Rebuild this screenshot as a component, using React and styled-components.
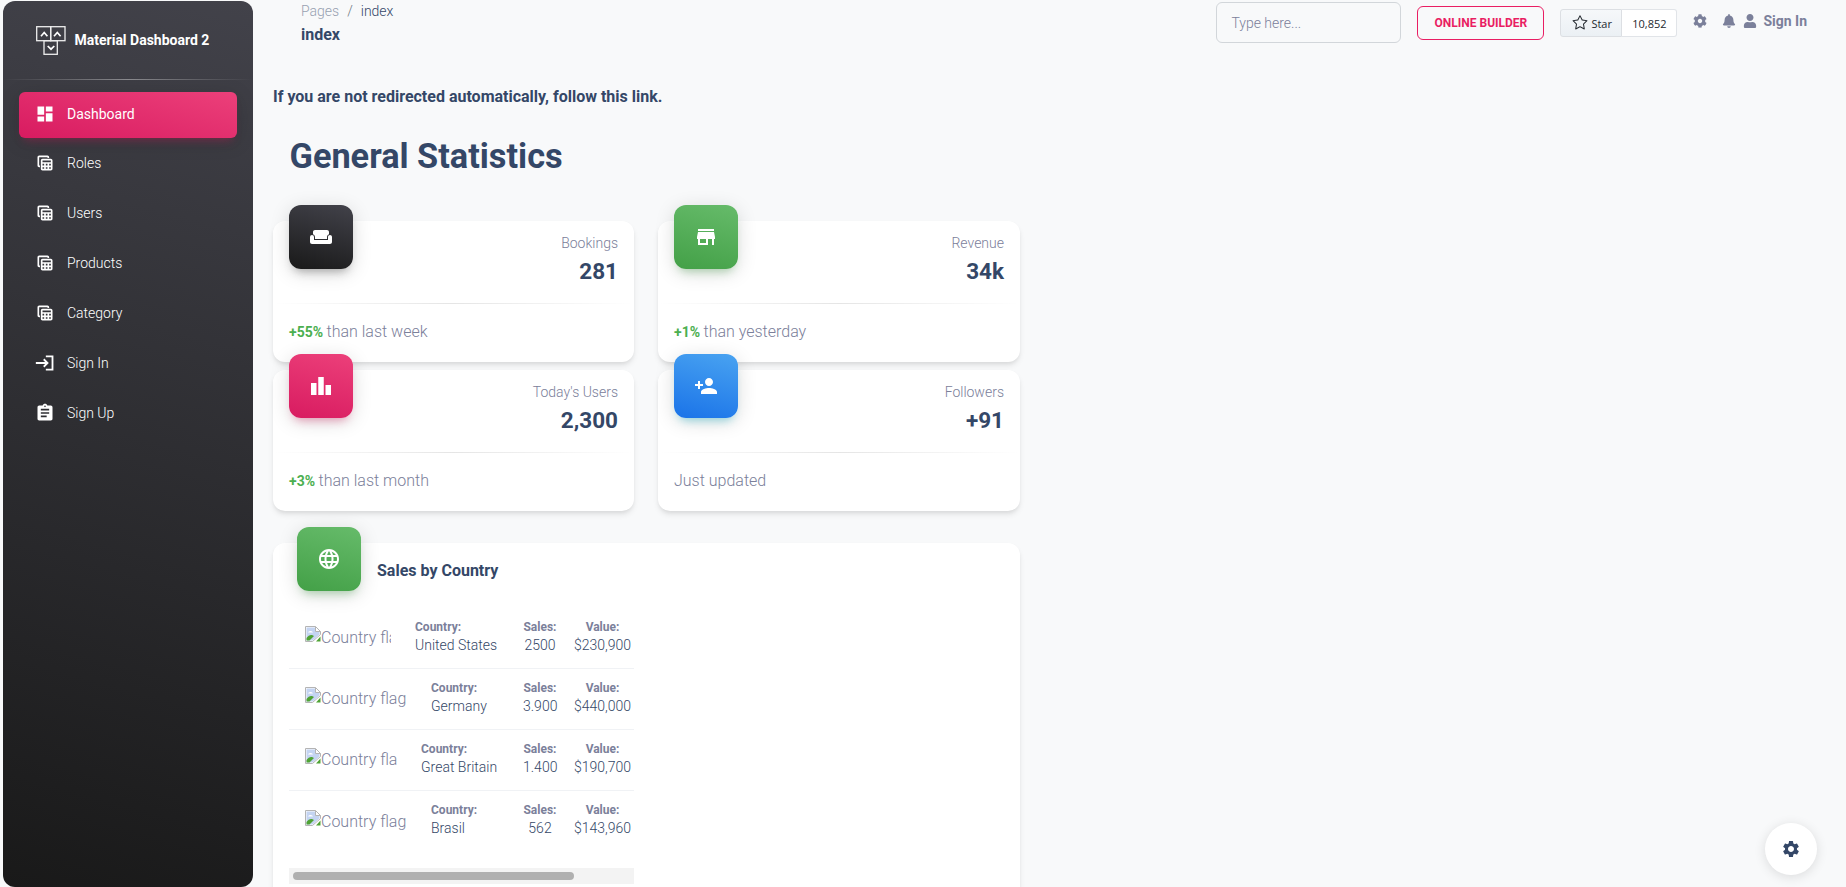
import React from "react";
import styled, { createGlobalStyle } from "styled-components";
import {
  MdDashboard,
  MdTableView,
  MdAssignment,
  MdWeekend,
  MdStore,
  MdLeaderboard,
  MdPersonAdd,
  MdLanguage,
  MdSettings,
} from "react-icons/md";
import { FaCog, FaBell, FaUser } from "react-icons/fa";
import { GoStar } from "react-icons/go";

const GlobalStyle = createGlobalStyle`
  html, body {
    margin: 0;
    height: 100%;
    overflow: hidden;
    background: #f8f9fa;
    font-family: Roboto, "Liberation Sans", sans-serif;
    color: #344767;
  }
  * { box-sizing: border-box; }
`;

const tones = {
  dark: { bg: "linear-gradient(195deg, #42424a, #191919)", glow: "rgba(64,64,64,.4)" },
  green: { bg: "linear-gradient(195deg, #66bb6a, #43a047)", glow: "rgba(76,175,80,.4)" },
  pink: { bg: "linear-gradient(195deg, #ec407a, #d81b60)", glow: "rgba(233,30,99,.4)" },
  blue: { bg: "linear-gradient(195deg, #49a3f1, #1a73e8)", glow: "rgba(0,188,212,.4)" },
};

const LoginIcon = () => (
  <svg width="20" height="20" viewBox="0 0 24 24" fill="none" stroke="currentColor" strokeWidth="2.2">
    <path d="M1 12h13.500M10.500 7.500 15 12l-4.500 4.500M13 4h8v16h-8" />
  </svg>
);

const navItems = [
  { label: "Dashboard", icon: <MdDashboard />, active: true },
  { label: "Roles", icon: <MdTableView /> },
  { label: "Users", icon: <MdTableView /> },
  { label: "Products", icon: <MdTableView /> },
  { label: "Category", icon: <MdTableView /> },
  { label: "Sign In", icon: <LoginIcon /> },
  { label: "Sign Up", icon: <MdAssignment /> },
];

const stats = [
  { tone: "dark", icon: <MdWeekend />, title: "Bookings", value: "281", delta: "+55%", note: "than last week" },
  { tone: "green", icon: <MdStore />, title: "Revenue", value: "34k", delta: "+1%", note: "than yesterday" },
  { tone: "pink", icon: <MdLeaderboard />, title: "Today's Users", value: "2,300", delta: "+3%", note: "than last month" },
  { tone: "blue", icon: <MdPersonAdd />, title: "Followers", value: "+91", note: "Just updated" },
];

const countries = [
  { name: "United States", sales: "2500", value: "$230,900", flagWidth: 86 },
  { name: "Germany", sales: "3.900", value: "$440,000", flagWidth: 102 },
  { name: "Great Britain", sales: "1.400", value: "$190,700", flagWidth: 92 },
  { name: "Brasil", sales: "562", value: "$143,960", flagWidth: 102 },
];

const LogoMark = () => (
  <svg width="30" height="30" viewBox="0 -1 30 30" fill="none" stroke="#eee" strokeWidth="1.3">
    <rect x="0.7" y="0.7" width="14" height="14" />
    <rect x="14.7" y="0.7" width="14.300" height="14" />
    <rect x="8" y="14.700" width="13.300" height="13.600" />
    <path d="M5 10.200 8.200 6.500l3.200 3.700M18 10.200l3.300-3.700 3.300 3.700M11.700 20l3.300 3.200 3.300-3.200" stroke="#fff" strokeWidth="1.700" />
  </svg>
);

const BrokenImage = () => (
  <svg width="16" height="16" viewBox="0 0 16 16">
    <path d="M.5.5h10l5 5v3l-8 7H.5z" fill="#fff" stroke="#b4b4b4" />
    <path d="M1.500 1.500h9v4h4v3l-7 6h-6z" fill="#c4d4f2" />
    <path d="M3 6.500c1-2 4-2 5 0z" fill="#fff" />
    <path d="M1.500 14.500v-2.500c2-2.500 4-3.500 6.500-2.500l1 .5-4.500 4.500z" fill="#4fa334" />
    <path d="M11 15.500h4.500v-5z" fill="#4fa334" />
    <path d="M10.500.5v5h5" fill="none" stroke="#b4b4b4" />
  </svg>
);

const App = () => {
  return (
    <Page>
      <GlobalStyle />
      <Sidebar>
        <Brand>
          <LogoMark />
          <BrandName>Material Dashboard 2</BrandName>
        </Brand>
        <SideRule />
        <NavList>
          {navItems.map((item) => (
            <NavItem key={item.label} $active={item.active}>
              <NavIcon>{item.icon}</NavIcon>
              {item.label}
            </NavItem>
          ))}
        </NavList>
      </Sidebar>

      <Main>
        <TopBar>
          <Crumbs>
            <CrumbTrail>
              <CrumbMuted>Pages</CrumbMuted>
              <CrumbSlash>/</CrumbSlash>
              <span>index</span>
            </CrumbTrail>
            <PageName>index</PageName>
          </Crumbs>
          <SearchInput placeholder="Type here..." />
          <BuilderButton>ONLINE BUILDER</BuilderButton>
          <StarWidget>
            <StarButton>
              <GoStar size={16} color="#24292f" />
              Star
            </StarButton>
            <StarCount>10,852</StarCount>
          </StarWidget>
          <TopActions>
            <GearLink><FaCog /></GearLink>
            <BellLink><FaBell /></BellLink>
            <SignIn>
              <FaUser />
              Sign In
            </SignIn>
          </TopActions>
        </TopBar>

        <Redirect>If you are not redirected automatically, follow this link.</Redirect>
        <Heading>General Statistics</Heading>

        <StatGrid>
          {stats.map((stat) => (
            <StatCard key={stat.title}>
              <StatHead>
                <IconBox $tone={stat.tone}>{stat.icon}</IconBox>
                <StatText>
                  <StatTitle>{stat.title}</StatTitle>
                  <StatValue>{stat.value}</StatValue>
                </StatText>
              </StatHead>
              <Rule />
              <StatFoot>
                {stat.delta && <Delta>{stat.delta} </Delta>}
                {stat.note}
              </StatFoot>
            </StatCard>
          ))}
        </StatGrid>

        <SalesCard>
          <SalesHead>
            <IconBox $tone="green"><MdLanguage /></IconBox>
            <SalesTitle>Sales by Country</SalesTitle>
          </SalesHead>
          <TableScroll>
            <TableInner>
              {countries.map((row) => (
                <CountryRow key={row.name}>
                  <FlagCell $width={row.flagWidth}>
                    <BrokenImage />
                    <span>Country flag</span>
                  </FlagCell>
                  <CountryCell>
                    <CellLabel>Country:</CellLabel>
                    <CellValue>{row.name}</CellValue>
                  </CountryCell>
                  <SalesCell>
                    <CellLabel>Sales:</CellLabel>
                    <CellValue>{row.sales}</CellValue>
                  </SalesCell>
                  <ValueCell>
                    <CellLabel>Value:</CellLabel>
                    <CellValue>{row.value}</CellValue>
                  </ValueCell>
                </CountryRow>
              ))}
            </TableInner>
          </TableScroll>
          <ScrollTrack>
            <ScrollThumb />
          </ScrollTrack>
        </SalesCard>
      </Main>

      <SettingsFab><MdSettings /></SettingsFab>
    </Page>
  );
};

export default App;

const Page = styled.div`
  display: flex;
  align-items: flex-start;
  height: 100vh;
  overflow: hidden;
`;

const Sidebar = styled.aside`
  flex: 0 0 250px;
  height: 886px;
  margin: 1px 0 0 3px;
  border-radius: 12px;
  background: linear-gradient(195deg, #42424a, #191919);
`;

const Brand = styled.div`
  display: flex;
  align-items: center;
  gap: 8.5px;
  height: 78px;
  padding-left: 33px;
`;

const BrandName = styled.span`
  color: #fff;
  font-size: 14px;
  font-weight: 700;
`;

const SideRule = styled.div`
  height: 1px;
  background: linear-gradient(90deg, rgba(255,255,255,0), rgba(255,255,255,.4), rgba(255,255,255,0));
`;

const NavList = styled.nav`
  display: flex;
  flex-direction: column;
  gap: 4px;
  padding: 12px 16px 0;
`;

const NavItem = styled.a`
  display: flex;
  align-items: center;
  height: 46px;
  padding-left: 17px;
  padding-bottom: ${(props) => (props.$active ? "2px" : "0")};
  border-radius: 6px;
  color: #fff;
  font-size: 14px;
  font-weight: ${(props) => (props.$active ? 400 : 300)};
  margin-bottom: ${(props) => (props.$active ? "-2px" : "0")};
  background: ${(props) => (props.$active ? tones.pink.bg : "transparent")};
  box-shadow: ${(props) =>
    props.$active ? "0 4px 20px rgba(0,0,0,.14), 0 7px 10px -5px rgba(233,30,99,.4)" : "none"};
`;

const NavIcon = styled.span`
  display: flex;
  width: 32px;
  margin-left: -1px;
  font-size: 20px;
`;

const Main = styled.main`
  flex: 1;
  min-width: 0;
  padding-left: 20px;
`;

const TopBar = styled.header`
  display: flex;
  align-items: flex-start;
  height: 47px;
  padding-left: 28px;
`;

const Crumbs = styled.div`
  margin-right: auto;
  padding-top: 1px;
`;

const CrumbTrail = styled.div`
  font-size: 14px;
  font-weight: 300;
  line-height: 21px;
`;

const CrumbMuted = styled.span`
  opacity: 0.5;
`;

const CrumbSlash = styled.span`
  margin: 0 8px;
  color: #6c757d;
`;

const PageName = styled.div`
  font-size: 16px;
  font-weight: 700;
  line-height: 26px;
`;

const SearchInput = styled.input`
  width: 185px;
  height: 41px;
  margin-top: 2px;
  padding: 0 14px;
  border: 1px solid #d2d6da;
  border-radius: 6px;
  background: transparent;
  font-family: inherit;
  font-size: 14px;
  font-weight: 300;
  outline: none;
  &::placeholder {
    color: #7b809a;
    opacity: 1;
  }
`;

const BuilderButton = styled.button`
  width: 127px;
  height: 34px;
  margin: 6px 0 0 16px;
  padding: 0;
  border: 1px solid #e91e63;
  border-radius: 6px;
  background: transparent;
  color: #e91e63;
  font-family: inherit;
  font-size: 12px;
  font-weight: 700;
`;

const StarWidget = styled.div`
  display: flex;
  height: 28px;
  margin: 9px 0 0 16px;
  font-family: "Open Sans", sans-serif;
  font-size: 11px;
  font-weight: 500;
  color: #24292f;
`;

const StarButton = styled.div`
  display: flex;
  align-items: center;
  gap: 3px;
  width: 62px;
  padding-left: 11px;
  border: 1px solid #dcdfe3;
  border-radius: 3px 0 0 3px;
  background: linear-gradient(180deg, #f6f8fa, #ebf0f4);
`;

const StarCount = styled.div`
  display: flex;
  align-items: center;
  justify-content: center;
  width: 55px;
  border: 1px solid #e1e4e8;
  border-left: 0;
  border-radius: 0 3px 3px 0;
  background: #fff;
`;

const TopActions = styled.div`
  display: flex;
  align-items: center;
  height: 42px;
  margin: 0 39px 0 16px;
  color: #7b809a;
  font-size: 14px;
`;

const GearLink = styled.span`
  display: flex;
  margin-right: 15px;
`;

const BellLink = styled.span`
  display: flex;
  margin-right: 7px;
`;

const SignIn = styled.span`
  display: flex;
  align-items: center;
  gap: 6px;
  font-size: 14px;
  font-weight: 700;
`;

const Redirect = styled.p`
  margin: 37px 0 0;
  font-size: 16px;
  font-weight: 700;
  line-height: 26px;
`;

const Heading = styled.h2`
  margin: 24px 0 0;
  padding-left: 16.5px;
  font-size: 34.3px;
  font-weight: 700;
  line-height: 45px;
`;

const StatGrid = styled.section`
  display: grid;
  grid-template-columns: 361px 362px;
  column-gap: 24px;
  row-gap: 8px;
  margin-top: 42px;
`;

const StatCard = styled.article`
  height: 141px;
  border-radius: 12px;
  background: #fff;
  box-shadow: 0 4px 6px -1px rgba(0,0,0,.1), 0 2px 4px -1px rgba(0,0,0,.06);
`;

const StatHead = styled.div`
  display: flex;
  justify-content: space-between;
  height: 82px;
  padding: 0 16px;
`;

const IconBox = styled.div`
  flex: none;
  display: flex;
  align-items: center;
  justify-content: center;
  width: 64px;
  height: 64px;
  margin-top: -16px;
  border-radius: 12px;
  color: #fff;
  font-size: 24px;
  background: ${(props) => tones[props.$tone].bg};
  box-shadow: 0 4px 20px rgba(0,0,0,.14), 0 7px 10px -5px ${(props) => tones[props.$tone].glow};
  svg {
    margin-top: -1px;
  }
`;

const StatText = styled.div`
  padding-top: 12px;
  text-align: right;
`;

const StatTitle = styled.div`
  color: #7b809a;
  font-size: 14px;
  font-weight: 300;
  line-height: 21px;
`;

const StatValue = styled.div`
  font-size: 22.5px;
  font-weight: 700;
  line-height: 35px;
`;

const Rule = styled.div`
  height: 1px;
  background: linear-gradient(90deg, rgba(0,0,0,0), rgba(0,0,0,.1), rgba(0,0,0,0));
`;

const StatFoot = styled.p`
  margin: 15px 0 0;
  padding: 0 16px;
  color: #7b809a;
  font-size: 16px;
  font-weight: 300;
  line-height: 26px;
`;

const Delta = styled.span`
  color: #4caf50;
  font-size: 14px;
  font-weight: 700;
`;

const SalesCard = styled.section`
  width: 747px;
  height: 400px;
  margin-top: 32px;
  padding: 0 16px;
  border-radius: 12px;
  background: #fff;
  box-shadow: 0 4px 6px -1px rgba(0,0,0,.1), 0 2px 4px -1px rgba(0,0,0,.06);
`;

const SalesHead = styled.div`
  display: flex;
  height: 48px;
  padding-left: 8px;
`;

const SalesTitle = styled.h6`
  margin: 12px 0 0 16px;
  font-size: 16px;
  font-weight: 700;
  line-height: 32px;
`;

const TableScroll = styled.div`
  width: 345px;
  height: 260px;
  margin-top: 17px;
  overflow: hidden;
`;

const TableInner = styled.div`
  width: 412px;
`;

const ScrollTrack = styled.div`
  width: 345px;
  height: 16px;
  padding: 4px;
  background: #f3f3f3;
`;

const ScrollThumb = styled.div`
  width: 281px;
  height: 8px;
  border-radius: 4px;
  background: #b0b0b0;
`;

const CountryRow = styled.div`
  display: flex;
  align-items: center;
  height: 61px;
  padding: 0 70px 0 16px;
  border-bottom: 1px solid #f0f2f5;
  &:last-child {
    border-bottom: 0;
  }
`;

const FlagCell = styled.div`
  flex: none;
  display: flex;
  align-items: flex-start;
  width: ${(props) => props.$width}px;
  margin-right: 24px;
  overflow: hidden;
  white-space: nowrap;
  color: #7b809a;
  font-size: 16px;
  font-weight: 300;
  line-height: 26px;
  svg {
    flex: none;
    margin-top: 1px;
  }
`;

const CountryCell = styled.div`
  flex: 1;
  min-width: 0;
  margin-bottom: 4px;
  white-space: nowrap;
`;

const SalesCell = styled.div`
  flex: none;
  width: 34px;
  margin: 0 17px 4px 0;
  text-align: center;
  white-space: nowrap;
`;

const ValueCell = styled.div`
  flex: none;
  width: 57px;
  margin-bottom: 4px;
  text-align: center;
  white-space: nowrap;
`;

const CellLabel = styled.div`
  color: #7b809a;
  font-size: 12px;
  font-weight: 700;
  line-height: 18px;
`;

const CellValue = styled.div`
  font-size: 14px;
  font-weight: 300;
  line-height: 19px;
`;

const SettingsFab = styled.button`
  position: fixed;
  right: 29px;
  bottom: 12px;
  display: flex;
  align-items: center;
  justify-content: center;
  width: 52px;
  height: 52px;
  padding: 0;
  border: 0;
  border-radius: 50%;
  background: #fff;
  color: #344767;
  font-size: 20px;
  box-shadow: 0 2px 12px rgba(0,0,0,.12);
`;
